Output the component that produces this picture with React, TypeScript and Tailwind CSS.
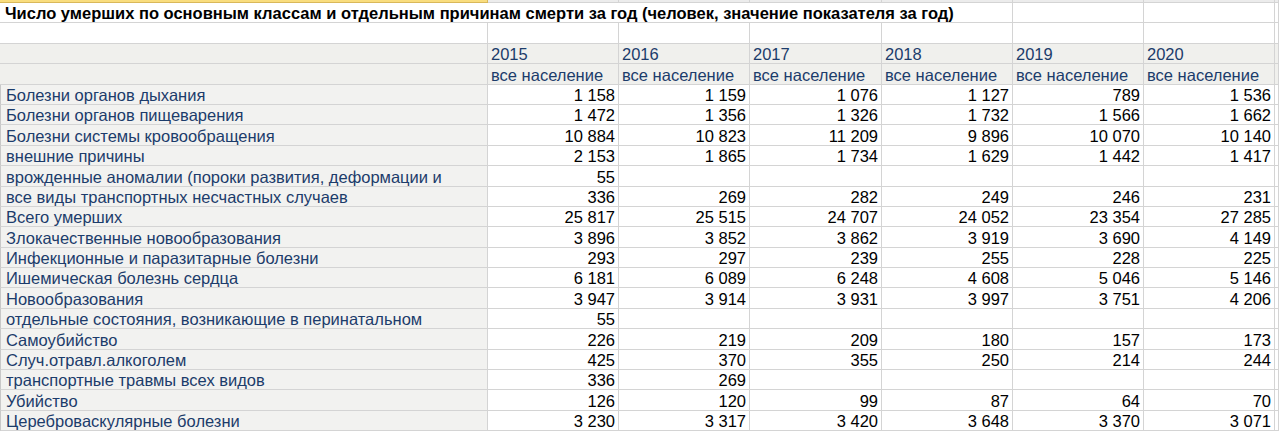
import React from 'react';

const years = ['2015', '2016', '2017', '2018', '2019', '2020'];

const rows: [string, string[]][] = [
  ['Болезни органов дыхания', ['1 158', '1 159', '1 076', '1 127', '789', '1 536']],
  ['Болезни органов пищеварения', ['1 472', '1 356', '1 326', '1 732', '1 566', '1 662']],
  ['Болезни системы кровообращения', ['10 884', '10 823', '11 209', '9 896', '10 070', '10 140']],
  ['внешние причины', ['2 153', '1 865', '1 734', '1 629', '1 442', '1 417']],
  ['врожденные аномалии (пороки развития, деформации и', ['55', '', '', '', '', '']],
  ['все виды транспортных несчастных случаев', ['336', '269', '282', '249', '246', '231']],
  ['Всего умерших', ['25 817', '25 515', '24 707', '24 052', '23 354', '27 285']],
  ['Злокачественные новообразования', ['3 896', '3 852', '3 862', '3 919', '3 690', '4 149']],
  ['Инфекционные и паразитарные болезни', ['293', '297', '239', '255', '228', '225']],
  ['Ишемическая болезнь сердца', ['6 181', '6 089', '6 248', '4 608', '5 046', '5 146']],
  ['Новообразования', ['3 947', '3 914', '3 931', '3 997', '3 751', '4 206']],
  ['отдельные состояния, возникающие в перинатальном', ['55', '', '', '', '', '']],
  ['Самоубийство', ['226', '219', '209', '180', '157', '173']],
  ['Случ.отравл.алкоголем', ['425', '370', '355', '250', '214', '244']],
  ['транспортные травмы всех видов', ['336', '269', '', '', '', '']],
  ['Убийство', ['126', '120', '99', '87', '64', '70']],
  ['Цереброваскулярные болезни', ['3 230', '3 317', '3 420', '3 648', '3 370', '3 071']],
];

const cols = 'grid grid-cols-[488px_131px_131px_132px_131px_131px_131px_1fr]';
const cell = 'flex items-end leading-[17px] whitespace-nowrap overflow-hidden border-r border-b border-[#d4d4d4]';

export default function App() {
  return (
    <div className="w-[1279px] h-[431px] overflow-hidden bg-white text-[16.5px] font-['Liberation_Sans',Arial,sans-serif]">
      {/* top sliver of the previous row */}
      <div className={`${cols} h-[3px]`}>
        <div className="bg-[#f9dd7e] border-r border-b border-[#d9b85a]" />
        {[0, 1, 2, 3, 4, 5, 6].map((i) => (
          <div key={i} className="bg-[#ececec] border-r border-b border-[#d4d4d4]" />
        ))}
      </div>

      <div className={`${cols} auto-rows-[20.4px]`}>
        {/* title row */}
        <div className={`${cell} col-span-5 pl-[5px] font-bold text-black`}>
          Число умерших по основным классам и отдельным причинам смерти за год (человек, значение показателя за год)
        </div>
        <div className={cell} />
        <div className={cell} />
        <div className={cell} />

        {/* empty row */}
        {[0, 1, 2, 3, 4, 5, 6, 7].map((i) => (
          <div key={i} className={cell} />
        ))}

        {/* years */}
        <div className={`${cell} bg-[#f0f0ed]`} />
        {years.map((y) => (
          <div key={y} className={`${cell} bg-[#f0f0ed] pl-[3px] text-[#1c3c6b]`}>{y}</div>
        ))}
        <div className={`${cell} bg-[#f0f0ed]`} />

        {/* population */}
        <div className={`${cell} bg-[#f0f0ed]`} />
        {years.map((y) => (
          <div key={y} className={`${cell} bg-[#f0f0ed] pl-[3px] text-[#1c3c6b]`}>все население</div>
        ))}
        <div className={`${cell} bg-[#f0f0ed]`} />

        {rows.map(([label, vals]) => (
          <React.Fragment key={label}>
            <div className={`${cell} bg-[#f2f2f0] pl-[5px] text-[#1c3c6b] border-l border-l-[#c8c8c8]`}>{label}</div>
            {vals.map((v, i) => (
              <div key={i} className={`${cell} justify-end pr-[3px] text-black`}>{v}</div>
            ))}
            <div className={cell} />
          </React.Fragment>
        ))}
      </div>
    </div>
  );
}
